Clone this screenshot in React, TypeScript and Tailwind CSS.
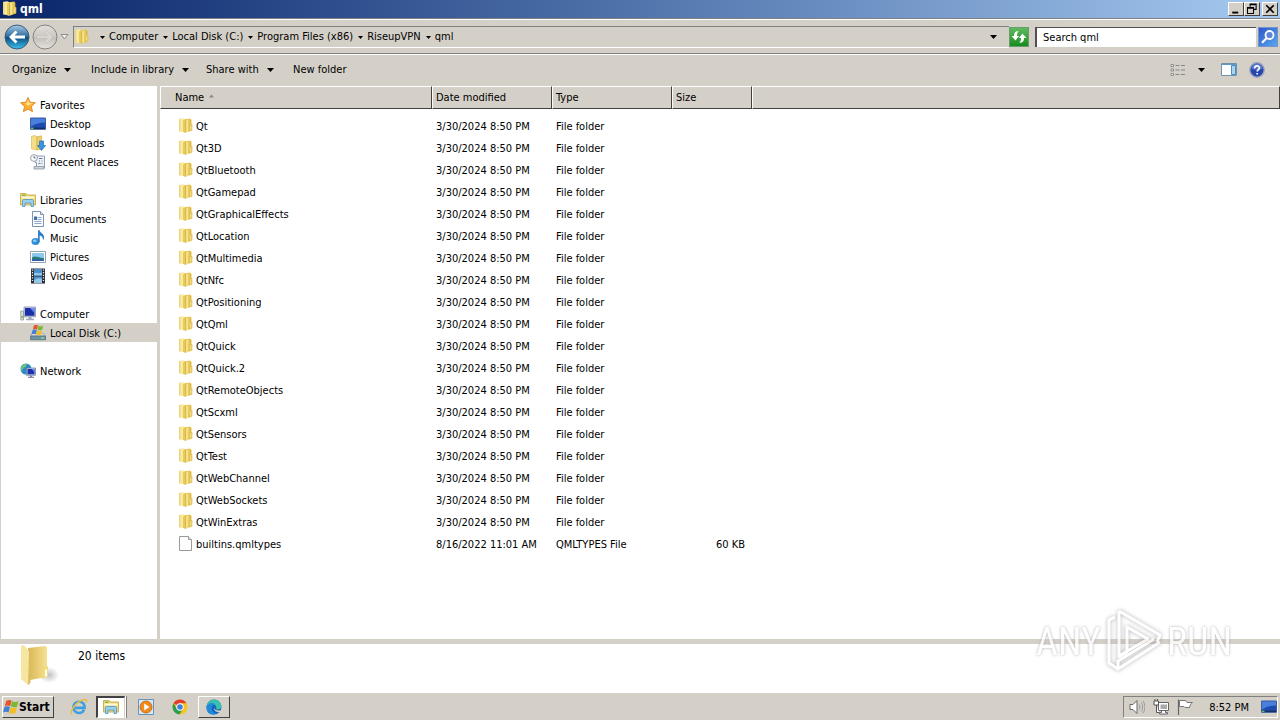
import type { ReactNode } from "react";

const folders = [
  "Qt", "Qt3D", "QtBluetooth", "QtGamepad", "QtGraphicalEffects", "QtLocation", "QtMultimedia",
  "QtNfc", "QtPositioning", "QtQml", "QtQuick", "QtQuick.2", "QtRemoteObjects", "QtScxml",
  "QtSensors", "QtTest", "QtWebChannel", "QtWebSockets", "QtWinExtras",
];

const rows = [
  ...folders.map((name) => ({ name, date: "3/30/2024 8:50 PM", type: "File folder", size: "" })),
  { name: "builtins.qmltypes", date: "8/16/2022 11:01 AM", type: "QMLTYPES File", size: "60 KB" },
];

const crumbs = ["Computer", "Local Disk (C:)", "Program Files (x86)", "RiseupVPN", "qml"];

// ---------- icons ----------

function Icon({ children, className = "size-4" }: { children: ReactNode; className?: string }) {
  return (
    <svg viewBox="0 0 16 16" className={`shrink-0 ${className}`} aria-hidden="true">
      {children}
    </svg>
  );
}

function FolderIcon() {
  return (
    <Icon>
      <path d="M7 1.200l5-.7 1 1v4l1.200.8v6.200L8 14.500z" fill="#e6c750" />
      <path d="M1 1l4-.8 2.600 1V14.800L1 13.200z" fill="#f8e9a0" />
      <path d="M1 1l1.400-.3v12.800L1 13.200z" fill="#ecd47a" />
      <path d="M5 2.500L7.500 1v13.800L5 14z" fill="#e9cb57" />
      <path d="M8 2l2.200-.6v12L8 14.200z" fill="#f6e48c" />
      <path d="M7.600 1.500v13M13 1.600v4" stroke="#c9a43a" strokeWidth=".7" />
      <path d="M11.400 7.500l2.400-1.200v5.500l-2.400.8z" fill="#f3de86" stroke="#cfae46" strokeWidth=".5" />
    </Icon>
  );
}

function FileIcon() {
  return (
    <Icon>
      <path d="M1.500.5h9l3 3v11h-12z" fill="#fdfdfd" stroke="#9a9a9a" />
      <path d="M10.500.5v3h3" fill="#e4e4e4" stroke="#9b9b9b" />
    </Icon>
  );
}

function StarIcon() {
  return (
    <Icon>
      <path d="M8 .4l2 4.800 5.300.6-3.900 3.600 1.100 5.300L8 12l-4.600 2.700 1.100-5.300L.600 5.800 6 5.200z" fill="#fbb034" stroke="#df8423" strokeWidth=".9" />
      <path d="M8 2.600l1.400 3.400 3.800.4-5.200 2-3-2 2-.4z" fill="#ffe28a" />
    </Icon>
  );
}

function DesktopIcon() {
  return (
    <Icon>
      <path d="M.5 2h15v11.300H.5z" fill="#1d4bb0" stroke="#3a5f9c" />
      <path d="M1 2.500h14v4C9 6.500 5 8 1 10.500z" fill="#4a80dc" />
      <path d="M1 11.600h14v1.400H1z" fill="#16305f" />
      <path d="M1 11.600h2.500v1.400H1z" fill="#6fb56a" />
    </Icon>
  );
}

function DownloadsIcon() {
  return (
    <Icon>
      <path d="M1.500 1.500l3-1L7 1.500V15l-5.500-1.200z" fill="#f4df86" stroke="#d3b04a" strokeWidth=".6" />
      <path d="M7 1.800l4.500-1V14L7 15z" fill="#ecd26c" stroke="#cfa840" strokeWidth=".6" />
      <path d="M9.500 6h4v4.500h2L11.500 15.500 7.500 10.500h2z" fill="#3b93dc" stroke="#1d6bb5" strokeWidth=".7" />
    </Icon>
  );
}

function RecentIcon() {
  return (
    <Icon>
      <path d="M5 2h9.500v12h-8V8.500H5z" fill="#eef2f6" stroke="#8695a5" strokeWidth=".9" />
      <path d="M4 12.500h10v2.500H4z" fill="#c8d3dd" stroke="#8695a5" strokeWidth=".8" />
      <path d="M9 4.500h3.500M9 7h1M11.500 7h1M8.500 9.500h2M11.500 9.500h1" stroke="#5f7c99" />
      <circle cx="4" cy="4" r="3.400" fill="#f7fafc" stroke="#8a98a7" strokeWidth=".9" />
      <path d="M4 2v2h1.500" fill="none" stroke="#456" strokeWidth=".8" />
    </Icon>
  );
}

function LibraryIcon() {
  return (
    <Icon>
      <path d="M.500 1.500h5.500l1 1.500h8.500v10H.500z" fill="#f2d873" stroke="#c9aa4b" strokeWidth=".9" />
      <path d="M1.500 4.500h13v2h-13z" fill="#fffbe0" />
      <path d="M2 3.300h3.500" stroke="#5eb04e" strokeWidth="1.200" />
      <path d="M2.500 14.500V9c0-1 .5-1.500 1.500-1.500h8c1 0 1.500.5 1.500 1.500v5.500H11V11H5v3.500z" fill="#9bd1ee" stroke="#4a94c4" strokeWidth=".8" />
    </Icon>
  );
}

function DocumentIcon() {
  return (
    <Icon>
      <path d="M2.500.500h8l3 3v12h-11z" fill="#fafcff" stroke="#7f93ab" />
      <path d="M10.500.500v3h3" fill="#d9e6f3" stroke="#7f93ab" />
      <path d="M7.500 6.500h4M7.500 8.500h4M4.500 10.500h7M4.500 12.500h7" stroke="#90a9c7" />
      <path d="M4 5.500h3V9H4z" fill="#3c6fae" />
    </Icon>
  );
}

function MusicIcon() {
  return (
    <Icon>
      <ellipse cx="5.500" cy="11.500" rx="4" ry="3.500" fill="#2f8fd4" />
      <ellipse cx="4.700" cy="10.700" rx="1.800" ry="1.200" fill="#8dcbf2" />
      <path d="M8 12V.300h1.600c.3 2.600 4.800 3.200 4.500 7.500-.1 1.200-.6 2-1.200 2.500.5-3-1.400-4.300-3.200-4.700V12z" fill="#2b7fc6" />
    </Icon>
  );
}

function PicturesIcon() {
  return (
    <Icon>
      <path d="M.500 2.500h15v11H.500z" fill="#fff" stroke="#94a2b0" />
      <path d="M2 4h12v8H2z" fill="#8cc9ef" />
      <path d="M2 8.500c3-2 5-.5 12 .8V12H2z" fill="#2c7d7a" />
      <path d="M2 10.500c4-1 8-.5 12 0V12H2z" fill="#2e62a5" />
    </Icon>
  );
}

function VideosIcon() {
  return (
    <Icon>
      <path d="M1 .500h14v15H1z" fill="#2a2f38" />
      <path d="M4 1h8v6.500H4zM4 8.500h8V15H4z" fill="#4c8fc8" />
      <path d="M4 5.500c2-2 4 1 8-1v3H4zM4 12c2-1 4-3 8-1v4H4z" fill="#93c8ea" />
      <path d="M2.500 1.500v13M13.500 1.500v13" stroke="#e6ebf0" strokeWidth="1.200" strokeDasharray="1.200 1.400" />
    </Icon>
  );
}

function ComputerIcon() {
  return (
    <Icon>
      <path d="M.800 5h2.700v9H.800z" fill="#dbe3d4" stroke="#7e8c80" strokeWidth=".7" />
      <path d="M1.400 10h1.500v2H1.400z" fill="#6fb34f" />
      <path d="M4 1h11.500v9.800H4z" fill="#cdd4e3" stroke="#8391ae" strokeWidth=".8" />
      <path d="M5 2h9.500v7.800H5z" fill="#1b2fa8" />
      <path d="M10 2h4.500v5z" fill="#6b8cf0" />
      <path d="M8.500 11h3v1.800h2.500v1.400H6v-1.400h2.500z" fill="#a0aab8" />
    </Icon>
  );
}

function WindowsFlag({ x = 0, y = 0, scale = 1 }: { x?: number; y?: number; scale?: number }) {
  return (
    <g transform={`translate(${x} ${y}) scale(${scale})`}>
      <path d="M3.300 1.800c2-1.200 3.600-1 5.400 0L7.200 7.300c-1.800-1-3.600-1-5.500 0z" fill="#e6552b" />
      <path d="M9.300 2.200c2 1 4 1 6.200 0L14 7.700c-2.200 1-4.200.8-6.200-.1z" fill="#7ab836" />
      <path d="M1.500 8c2-1 3.700-1 5.500 0L5.500 13.500c-1.800-1-3.500-1-5.500 0z" fill="#3f7fd6" />
      <path d="M7.600 8.400c2 1 4 1 6.200 0L12.300 14c-2.200 1-4.200.8-6.200-.1z" fill="#f6bc22" />
    </g>
  );
}

function DiskIcon() {
  return (
    <Icon>
      <path d="M2 8h11l2.500 3H.500z" fill="#d5dbe0" stroke="#8a959e" strokeWidth=".6" />
      <path d="M.500 11h15v3.800H.500z" fill="#6f93a5" stroke="#46606f" strokeWidth=".6" />
      <path d="M11 13h3" stroke="#8ff08a" strokeWidth="1.100" />
      <WindowsFlag x={1.5} y={-1} scale={0.76} />
    </Icon>
  );
}

function NetworkIcon() {
  return (
    <Icon>
      <circle cx="6" cy="6" r="5.500" fill="#2b8bc4" />
      <path d="M2 3c2-2.500 4-2.200 5-1.500L5.500 4 3.500 5 2 8C.500 6.500.800 4.500 2 3zM6 8l2.500-1v4L6.500 11z" fill="#6cc47a" />
      <path d="M6.500 5h9v7.300h-9z" fill="#c2cbe0" stroke="#6577a5" strokeWidth=".7" />
      <path d="M7.500 6h7v5.300h-7z" fill="#1c2fae" />
      <path d="M11.500 6h3v3z" fill="#718cf0" />
      <path d="M10 12.500h2v1.200h2V15H8v-1.300h2z" fill="#7f8ba5" />
    </Icon>
  );
}

function Caret() {
  return (
    <svg viewBox="0 0 7 4" className="h-1 w-[7px] shrink-0" aria-hidden="true">
      <path d="M0 0h7L3.500 4z" fill="#000" />
    </svg>
  );
}

function CrumbArrow() {
  return (
    <svg viewBox="0 0 5 3" className="h-[3px] w-[5px] shrink-0" aria-hidden="true">
      <path d="M0 0h5L2.500 3z" fill="#000" />
    </svg>
  );
}

function NavArrow({ back = false }: { back?: boolean }) {
  return (
    <svg viewBox="0 0 26 26" className="size-[26px]" aria-hidden="true">
      <defs>
        <linearGradient id={back ? "navBack" : "navForward"} x1="0" y1="0" x2="0" y2="1">
          <stop offset="0" stopColor={back ? "#a9c9e2" : "#e2dfda"} />
          <stop offset=".48" stopColor={back ? "#2c6c9f" : "#ccc9c4"} />
          <stop offset=".52" stopColor={back ? "#0d4d83" : "#c2bfba"} />
          <stop offset="1" stopColor={back ? "#3cc0ee" : "#e6e3de"} />
        </linearGradient>
      </defs>
      <circle cx="13" cy="13" r="12" fill={back ? "url(#navBack)" : "url(#navForward)"} stroke={back ? "#3e5d78" : "#86837f"} />
      {back ? (
        <path d="M11.500 6.500L5 13l6.500 6.500 2-2-3-3H21v-3H10.500l3-3z" fill="#fff" />
      ) : (
        <path d="M14.500 6.500L21 13l-6.500 6.500-2-2 3-3H5v-3h10.500l-3-3z" fill="#d8d5d0" stroke="#c0bdb8" strokeWidth=".5" />
      )}
    </svg>
  );
}

// ---------- sidebar ----------

const groups = [
  {
    label: "Favorites",
    icon: <StarIcon />,
    items: [
      { label: "Desktop", icon: <DesktopIcon /> },
      { label: "Downloads", icon: <DownloadsIcon /> },
      { label: "Recent Places", icon: <RecentIcon /> },
    ],
  },
  {
    label: "Libraries",
    icon: <LibraryIcon />,
    items: [
      { label: "Documents", icon: <DocumentIcon /> },
      { label: "Music", icon: <MusicIcon /> },
      { label: "Pictures", icon: <PicturesIcon /> },
      { label: "Videos", icon: <VideosIcon /> },
    ],
  },
  { label: "Computer", icon: <ComputerIcon />, items: [{ label: "Local Disk (C:)", icon: <DiskIcon />, active: true }] },
  { label: "Network", icon: <NetworkIcon />, items: [] },
];

function Sidebar() {
  return (
    <nav className="flex w-40 shrink-0 flex-col gap-[19px] border-r-3 border-l border-[#d4d0c8] bg-white pt-[9px]">
      {groups.map((group) => (
        <div key={group.label}>
          <a href="#" className="flex h-[19px] items-center gap-1 pl-[19px]">
            {group.icon}
            <span className="pt-0.5">{group.label}</span>
          </a>
          {group.items.map((item) => (
            <a
              key={item.label}
              href="#"
              className={`flex h-[19px] items-center gap-1 pl-[29px] ${"active" in item ? "bg-[#d4d0c8]" : ""}`}
            >
              {item.icon}
              <span className="pt-0.5">{item.label}</span>
            </a>
          ))}
        </div>
      ))}
    </nav>
  );
}

// ---------- window chrome ----------

const raised = "border border-t-white border-l-white border-r-[#404040] border-b-[#404040] bg-[#d4d0c8]";

function TitleBar() {
  return (
    <header className="flex h-[18px] items-center bg-linear-to-r from-[#0a246a] to-[#a6caf0] px-0.5">
      <FolderIcon />
      <h1 className="flex-1 pl-0.5 text-[12px] font-bold text-white">qml</h1>
      <button type="button" aria-label="Minimize" className={`flex h-3.5 w-4 items-center justify-center ${raised}`}>
        <Icon className="size-3">
          <path d="M3 11.500h8V14H3z" />
        </Icon>
      </button>
      <button type="button" aria-label="Restore" className={`flex h-3.5 w-4 items-center justify-center ${raised}`}>
        <Icon className="size-3">
          <path d="M5.500 5V1.500h8v7H10M5 2.300h9M2 6h8v8H2zM2 7h8" fill="none" stroke="#000" strokeWidth="1.400" />
        </Icon>
      </button>
      <button type="button" aria-label="Close" className={`ml-0.5 flex h-3.5 w-4 items-center justify-center ${raised}`}>
        <Icon className="size-3">
          <path d="M3 3l10 10M13 3L3 13" stroke="#000" strokeWidth="2.200" />
        </Icon>
      </button>
    </header>
  );
}

function AddressBar() {
  return (
    <div className="flex h-9 items-center border-t border-b border-[#808080] pt-0.5 pl-1 shadow-[inset_0_1px_0_#fff,0_1px_0_#fff]">
      <button type="button" aria-label="Back"><NavArrow back /></button>
      <button type="button" aria-label="Forward" className="ml-0.5"><NavArrow /></button>
      <button type="button" aria-label="Recent pages" className="ml-0.5">
        <svg viewBox="0 0 9 6" className="h-1.5 w-[9px]" aria-hidden="true">
          <path d="M1 .500h7L4.500 5z" fill="#eee" stroke="#777" strokeWidth=".8" />
        </svg>
      </button>
      <div className="ml-1 flex h-[22px] flex-1 items-center border-t border-b border-l border-t-[#808080] border-b-white border-l-[#808080] pr-3">
        <FolderIcon />
        <div className="flex flex-1 items-center gap-[5px] pl-2.5">
          {crumbs.map((crumb) => (
            <button type="button" key={crumb} className="flex items-center gap-1 whitespace-nowrap">
              <CrumbArrow />
              {crumb}
            </button>
          ))}
        </div>
        <button type="button" aria-label="Previous locations" className="flex"><Caret /></button>
      </div>
      <button type="button" aria-label="Refresh" className="flex size-5 items-center justify-center border border-[#6b9c6b] bg-linear-to-b from-[#5dba5d] to-[#128c1c]">
        <svg viewBox="0 0 18 18" className="size-[18px]" aria-hidden="true">
          <path d="M8.500 3C5 3.500 4 5 4 8H1.500L5.500 12.500 9 8H7c0-2 .3-3 1.500-5z" fill="#fff" />
          <path d="M9.500 15c3.500-.5 4.500-2 4.500-5h2.500L12.500 5.500 9 10h2c0 2-.3 3-1.500 5z" fill="#fff" />
        </svg>
      </button>
      <input
        type="text"
        aria-label="Search qml"
        placeholder="Search qml"
        className="ml-1.5 h-5 w-[221px] border-t border-l-2 border-[#505050] bg-white pl-1.5 outline-none placeholder:text-black placeholder:opacity-100"
      />
      <button type="button" aria-label="Search" className="mr-0.5 ml-0.5 flex size-5 items-center justify-center border border-[#7591cf] bg-linear-to-br from-[#2f55c8] to-[#5ba8ee]">
        <Icon>
          <circle cx="9.500" cy="6" r="4" fill="#5d83dc" stroke="#fff" strokeWidth="1.800" />
          <path d="M6.800 9L2 13.800" stroke="#fff" strokeWidth="2.200" />
        </Icon>
      </button>
    </div>
  );
}

function Toolbar() {
  return (
    <div className="flex h-8 items-center pr-[15px] pl-3">
      <button type="button" className="flex w-[79px] items-center gap-2">Organize <Caret /></button>
      <button type="button" className="flex w-[115px] items-center gap-2 whitespace-nowrap">Include in library <Caret /></button>
      <button type="button" className="flex w-[87px] items-center gap-2 whitespace-nowrap">Share with <Caret /></button>
      <button type="button">New folder</button>
      <div className="ml-auto flex items-center">
        <button type="button" aria-label="Change view">
          <Icon>
            <path d="M1 2.500h2.500v2H1zM1 7h2.500v2H1zM1 11.500h2.500v2H1z" fill="#fff" stroke="#888" />
            <path d="M5.500 3.500h4M11 3.500h4M5.500 8h4M11 8h4M5.500 12.500h4M11 12.500h4" stroke="#888" />
          </Icon>
        </button>
        <button type="button" aria-label="More view options" className="mr-4 ml-3"><Caret /></button>
        <button type="button" aria-label="Show the preview pane" className="mr-3">
          <Icon>
            <path d="M.500 1.500h15v12H.500z" fill="#fff" stroke="#6f93ad" />
            <path d="M1 2.500h14" stroke="#5c9bcb" />
            <path d="M10.500 3.500h4v9h-4z" fill="#a9d5f0" stroke="#4d8bb8" />
          </Icon>
        </button>
        <button type="button" aria-label="Help">
          <Icon>
            <circle cx="8" cy="8" r="7.200" fill="#2446ad" stroke="#9aa3bd" strokeWidth="1.400" />
            <path d="M2.500 7a5.500 5.500 0 0111 0c-3 1-8 1-11 0z" fill="#5676cf" />
            <path d="M5.700 6.200c0-3.200 4.700-3 4.700-.3 0 1.700-2.200 1.700-2.200 3.700M8.200 11v1.600" fill="none" stroke="#fff" strokeWidth="1.700" />
          </Icon>
        </button>
      </div>
    </div>
  );
}

// ---------- file list ----------

const th = "h-[23px] border border-t-white border-l-white border-r-[#404040] border-b-[#404040] bg-[#d4d0c8] text-left font-normal";

function FileList() {
  return (
    <main className="min-w-0 flex-1 bg-white">
      <table className="w-full table-fixed border-separate border-spacing-0">
        <thead>
          <tr>
            <th className={`w-[272px] pl-3.5 ${th}`}>
              <span className="flex items-center gap-1">
                Name
                <svg viewBox="0 0 7 4" className="mb-1 h-1 w-[7px]" aria-hidden="true">
                  <path d="M1 3.500h5L3.500.500z" fill="#8c8882" />
                </svg>
              </span>
            </th>
            <th className={`w-[120px] pl-[3px] ${th}`}>Date modified</th>
            <th className={`w-[120px] pl-[3px] ${th}`}>Type</th>
            <th className={`w-20 pl-[3px] ${th}`}>Size</th>
            <th aria-hidden="true" className={th} />
          </tr>
        </thead>
        <tbody>
          <tr aria-hidden="true"><td colSpan={5} className="h-1.5" /></tr>
          {rows.map((row) => (
            <tr key={row.name} className="h-[22px]">
              <td className="pl-[18px]">
                <span className="flex items-center gap-0.5">
                  {row.size ? <FileIcon /> : <FolderIcon />}
                  <span className="pt-0.5">{row.name}</span>
                </span>
              </td>
              <td className="pt-0.5 pl-1">{row.date}</td>
              <td className="pt-0.5 pl-1">{row.type}</td>
              <td className="pt-0.5 pr-[7px] text-right">{row.size}</td>
              <td />
            </tr>
          ))}
        </tbody>
      </table>
    </main>
  );
}

function DetailsPane() {
  return (
    <section className="relative flex h-[53px] items-start border-t-5 border-[#d4d0c8] bg-white pl-4">
      <svg viewBox="0 0 44 44" className="size-11 shrink-0" aria-hidden="true">
        <defs>
          <linearGradient id="bigFolder" x1="0" y1="0" x2="1" y2="0">
            <stop offset="0" stopColor="#d9b755" />
            <stop offset="1" stopColor="#f5e192" />
          </linearGradient>
          <radialGradient id="folderShade">
            <stop offset="0" stopColor="#999" stopOpacity=".6" />
            <stop offset="1" stopColor="#999" stopOpacity="0" />
          </radialGradient>
        </defs>
        <ellipse cx="33" cy="31" rx="10" ry="8" fill="url(#folderShade)" />
        <path d="M12 4l17-2 2 1v30l-17 3z" fill="url(#bigFolder)" />
        <path d="M5 2l3-1 6 8v31l-2 1-7-6z" fill="#f6e6a2" />
        <path d="M13 8l1.500-.5v31l-2.500 2.500z" fill="#dcbd62" />
        <path d="M26 26c1-2 4-2 6-4v10l-6 3z" fill="#f1da7d" />
        <path d="M29 26l2-1v7l-2 1z" fill="#fff" />
      </svg>
      <p className="pt-[5px] pl-[18px] text-[12px]">20 items</p>
      <Watermark />
    </section>
  );
}

function Watermark() {
  return (
    <div className="absolute right-12 bottom-5 flex h-16 items-center gap-1 font-['Liberation_Sans_Narrow','Roboto_Condensed',sans-serif] text-[38px] text-white opacity-80 [text-shadow:0_0_3px_#999]">
      <span className="pt-1">ANY</span>
      <svg viewBox="0 0 58 64" className="h-16 w-[58px] drop-shadow-[0_0_2px_#999]" aria-hidden="true">
        <g fill="none" stroke="#fff" strokeWidth="3" strokeLinejoin="round">
          <path d="M14 3v46l8-5V19l21 12-29 17M14 3l41 24-3 7" />
          <path d="M10 9L4 12v43l9 6 42-27M13 61v-8l36-22" />
        </g>
      </svg>
      <span className="pt-1">RUN</span>
    </div>
  );
}

// ---------- taskbar ----------

function Taskbar() {
  return (
    <footer className="flex h-7 items-center border-t border-white bg-[#d4d0c8] px-0.5">
      <button type="button" className={`flex h-[22px] w-[52px] items-center text-[12px] font-bold ${raised}`}>
        <Icon><WindowsFlag /></Icon>
        Start
      </button>
      <button type="button" aria-label="Internet Explorer" className="ml-4 flex">
        <Icon className="size-[18px]">
          <path d="M12.500 10.500A5 5 0 118 3.300c3.200 0 5.200 2.200 5 5.500H4.500" fill="none" stroke="#3c9fe0" strokeWidth="2.300" />
          <path d="M2 14.500C-1 13 4 5 10 2.300c4-1.800 5.500-1 4.500 1.700" fill="none" stroke="#e9bd3a" strokeWidth="1.300" />
        </Icon>
      </button>
      <button type="button" aria-label="Windows Explorer" className="ml-2 flex h-[22px] w-[29px] items-center justify-center border border-t-2 border-l-2 border-t-[#404040] border-r-[#d4d0c8] border-b-white border-l-[#404040] bg-white shadow-[1px_0_0_#fff,2px_0_0_#808080]">
        <LibraryIcon />
      </button>
      <button type="button" aria-label="Media Player" className="ml-[13px] flex">
        <Icon>
          <path d="M.500.500h15v15H.500z" fill="#d7e9f7" stroke="#6195bd" />
          <circle cx="8" cy="8" r="6" fill="#f08a1d" stroke="#d1700f" />
          <path d="M6.200 4.500v7L11.500 8z" fill="#fff" />
        </Icon>
      </button>
      <button type="button" aria-label="Chrome" className="ml-[18px] flex">
        <Icon>
          <circle cx="8" cy="8" r="7.500" fill="#f8c51b" />
          <path d="M8 8L1.500 4.200A7.500 7.500 0 0114.500 4.300H8z" fill="#df3f31" />
          <path d="M1.500 4.200a7.500 7.500 0 006 11.300L11 9.700 5 10z" fill="#2d9e4f" />
          <circle cx="8" cy="8" r="3.700" fill="#fff" />
          <circle cx="8" cy="8" r="2.800" fill="#3e7de8" />
        </Icon>
      </button>
      <button type="button" aria-label="Edge" className={`ml-2.5 flex h-[22px] w-8 items-center justify-center ${raised}`}>
        <Icon>
          <circle cx="8" cy="8" r="7.500" fill="#1465b8" />
          <path d="M.600 7.500C1.500-.500 13-2 15.300 6.500c.7 3-2 4.500-5.300 3.700C11 8 10 5.500 7 5.200 4 5 1.500 6 .600 7.500z" fill="#37c3ad" />
          <path d="M.600 7.500C2 3.500 8 3 9.500 6 6 5 4.500 9 6.500 12c1 1.500 2.500 2.500 4 2.700C4 17.500-.300 13 .600 7.500z" fill="#2289d8" />
          <path d="M8 8.500c.3 2.500 3 3.800 8 2.500v2c-5 1-8.500-1-8-4.500z" fill="#d4d0c8" />
        </Icon>
      </button>
      <div className="ml-auto flex h-[22px] items-center border border-t-[#808080] border-r-white border-b-white border-l-[#808080] pl-[5px]">
        <button type="button" aria-label="Volume" className="flex">
          <Icon>
            <path d="M1 5.500h3l4-4v13l-4-4H1z" fill="#fff" stroke="#666" />
            <path d="M10 5.500c1.200 1.500 1.200 3.500 0 5M12 3.500c2.200 2.600 2.200 6.400 0 9M14 2c2.500 3.500 2.500 8.500 0 12" fill="none" stroke="#888" strokeWidth=".8" />
          </Icon>
        </button>
        <button type="button" aria-label="Network status" className="ml-2 flex">
          <Icon>
            <path d="M5.500 3.500h10v8h-10zM8.500 11.500v2h-2v1.500h8v-1.500h-2v-2" fill="#fff" stroke="#666" />
            <path d="M7.500 5.500h6.500v4.500H7.500z" fill="#aaa" />
            <path d="M1 2h4.500v4H1zM2 0v2M4.500 0v2M3.500 6v7.500H6" fill="#fff" stroke="#555" />
          </Icon>
        </button>
        <button type="button" aria-label="Action Center" className="ml-2 flex">
          <Icon>
            <path d="M1.500.500V16" stroke="#666" strokeWidth="1.200" />
            <path d="M2.500 1.500h6l1.500 2h5.500c-2 1.500-2.500 3-3 5H8l-1-1H2.500z" fill="#fff" stroke="#777" />
          </Icon>
        </button>
        <time className="mr-3 ml-4 pt-0.5">8:52 PM</time>
        <button type="button" aria-label="Show desktop" className="flex"><DesktopIcon /></button>
      </div>
    </footer>
  );
}

export default function App() {
  return (
    <div className="flex min-h-screen flex-col bg-[#d4d0c8] font-['DejaVu_Sans_Condensed','DejaVu_Sans',sans-serif] text-[11px] leading-[14px] text-black">
      <TitleBar />
      <AddressBar />
      <Toolbar />
      <div className="flex flex-1">
        <Sidebar />
        <FileList />
      </div>
      <DetailsPane />
      <Taskbar />
    </div>
  );
}
